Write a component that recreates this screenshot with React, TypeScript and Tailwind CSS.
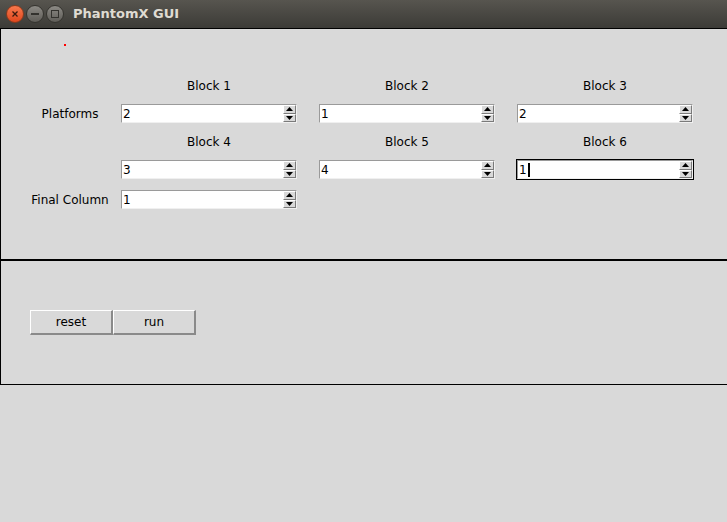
import React from "react";

const font = { fontFamily: '"DejaVu Sans", sans-serif' };

function Spin({ value, focused = false }: { value: string; focused?: boolean }) {
  return (
    <div
      className={
        "w-[178px] h-[21px] p-px " + (focused ? "bg-black" : "bg-[#d9d9d9]")
      }
    >
      <div className="flex h-full w-full border-t border-l border-t-[#9a9a9a] border-l-[#9a9a9a] border-b border-r border-b-[#f0f0f0] border-r-[#f0f0f0] bg-white">
        <div className="flex flex-1 items-center pl-px text-[12px] leading-none text-black">
          <span>{value}</span>
          {focused && <span className="ml-px inline-block h-[14px] w-[2px] bg-black" />}
        </div>
        <div className="flex w-[13px] flex-col">
          <div className="flex flex-1 items-center justify-center border-t border-l border-t-white border-l-white border-b border-r border-b-[#7a7a7a] border-r-[#7a7a7a] bg-[#d9d9d9]">
            <svg width="7" height="4" viewBox="0 0 7 4">
              <polygon points="0,4 7,4 3.5,0" fill="#000" />
            </svg>
          </div>
          <div className="flex flex-1 items-center justify-center border-t border-l border-t-white border-l-white border-b border-r border-b-[#7a7a7a] border-r-[#7a7a7a] bg-[#d9d9d9]">
            <svg width="7" height="4" viewBox="0 0 7 4">
              <polygon points="0,0 7,0 3.5,4" fill="#000" />
            </svg>
          </div>
        </div>
      </div>
    </div>
  );
}

function Label({ text }: { text: string }) {
  return (
    <div className="flex h-[18px] w-[178px] items-center justify-center text-[12px] text-black">
      {text}
    </div>
  );
}

function SideLabel({ text }: { text: string }) {
  return (
    <div className="flex h-[21px] w-[119px] items-center justify-center pl-[30px] pr-[11px] text-[12px] text-black">
      {text}
    </div>
  );
}

function Btn({ text }: { text: string }) {
  return (
    <div className="flex h-[25px] w-[83px] items-center justify-center border-t border-l border-t-white border-l-white border-b-2 border-r-2 border-b-[#8a8a8a] border-r-[#8a8a8a] bg-[#d9d9d9] text-[12px] text-black">
      {text}
    </div>
  );
}

export default function App() {
  return (
    <div className="h-[522px] w-[727px] overflow-hidden bg-[#d9d9d9]" style={font}>
      {/* Title bar */}
      <div className="flex h-[28px] items-center bg-gradient-to-b from-[#57554f] to-[#3c3b37]">
        <div className="ml-[6px] flex items-center gap-[1px]">
          <div className="flex h-[18px] w-[18px] items-center justify-center rounded-full border border-[#8a3a1d] bg-gradient-to-b from-[#f7784c] to-[#e0461b]">
            <svg width="8" height="8" viewBox="0 0 8 8">
              <path d="M1.5 1.5 L6.5 6.5 M6.5 1.5 L1.5 6.5" stroke="#3b1a0e" strokeWidth="1.3" />
            </svg>
          </div>
          <div className="ml-[1px] flex h-[18px] w-[18px] items-center justify-center rounded-full border border-[#35342f] bg-gradient-to-b from-[#8c8a85] to-[#5f5d58]">
            <div className="h-[2px] w-[8px] bg-[#33322e]" />
          </div>
          <div className="ml-[1px] flex h-[18px] w-[18px] items-center justify-center rounded-full border border-[#35342f] bg-gradient-to-b from-[#8c8a85] to-[#5f5d58]">
            <div className="h-[8px] w-[8px] border-[1.5px] border-[#33322e]" />
          </div>
        </div>
        <div className="ml-[9px] text-[13px] font-bold text-[#dfdbd2]">PhantomX GUI</div>
      </div>

      {/* Frame 1 */}
      <div className="flex h-[232px] w-[740px] flex-col border-t border-l border-b border-black">
        <div className="ml-[63px] mt-[15px] h-[2px] w-[2px] bg-[#ff0000]" />
        <div className="mt-[31px] flex">
          <div className="w-[119px]" />
          <div className="flex gap-[20px]">
            <Label text="Block 1" />
            <Label text="Block 2" />
            <Label text="Block 3" />
          </div>
        </div>
        <div className="mt-[8px] flex">
          <SideLabel text="Platforms" />
          <div className="flex gap-[20px]">
            <Spin value="2" />
            <Spin value="1" />
            <Spin value="2" />
          </div>
        </div>
        <div className="mt-[9px] flex">
          <div className="w-[119px]" />
          <div className="flex gap-[20px]">
            <Label text="Block 4" />
            <Label text="Block 5" />
            <Label text="Block 6" />
          </div>
        </div>
        <div className="mt-[8px] flex">
          <div className="w-[119px]" />
          <div className="flex gap-[20px]">
            <Spin value="3" />
            <Spin value="4" />
            <Spin value="1" focused />
          </div>
        </div>
        <div className="mt-[9px] flex">
          <SideLabel text="Final Column" />
          <Spin value="1" />
        </div>
      </div>

      {/* Frame 2 */}
      <div className="flex h-[125px] w-[740px] flex-col border-t border-l border-b border-black">
        <div className="ml-[29px] mt-[49px] flex">
          <Btn text="reset" />
          <Btn text="run" />
        </div>
      </div>
    </div>
  );
}
